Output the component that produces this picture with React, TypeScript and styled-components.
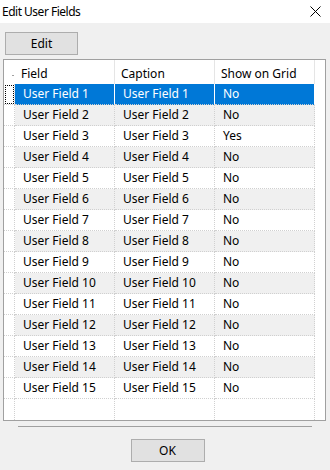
import React from 'react';
import styled, { createGlobalStyle } from 'styled-components';

const GlobalStyle = createGlobalStyle`
  html, body { margin: 0; padding: 0; background: #f0f0f0; }
  * { box-sizing: border-box; }
`;

const Window = styled.div`
  width: 330px;
  height: 470px;
  display: flex;
  flex-direction: column;
  background: #f0f0f0;
  font-family: "Noto Sans", "Liberation Sans", sans-serif;
  font-size: 12px;
  color: #000;
`;

const TitleBar = styled.div`
  height: 23px;
  background: #fff;
  display: flex;
  align-items: center;
  justify-content: space-between;
  padding: 0 9px 0 2px;
`;

const Title = styled.span`
  line-height: 16px;
  letter-spacing: -0.5px;
`;

const Toolbar = styled.div`
  display: flex;
  padding: 9px 0 0 5px;
`;

const DialogButton = styled.button<{ $width: number }>`
  width: ${p => p.$width}px;
  height: 23px;
  padding: 0;
  border: 1px solid #adadad;
  background: #e1e1e1;
  font: inherit;
  color: #000;
`;

const Grid = styled.div`
  margin: 4px 4px 0 3px;
  height: 362px;
  border: 1px solid #a0a0a0;
  background: #fff;
`;

const Row = styled.div<{ $height: number }>`
  display: grid;
  grid-template-columns: 11px 100px 100px 100px;
  width: 311px;
  height: ${p => p.$height}px;
`;

const HeaderCorner = styled.div`
  display: flex;
  justify-content: flex-end;
  padding: 15px 1px 0 0;
`;

const SortMark = styled.span`
  width: 2px;
  height: 1px;
  background: #a0a0a0;
`;

const HeaderCell = styled.div`
  padding: 6px 0 0 6px;
  line-height: 16px;
  border-right: 1px solid #e5e5e5;
  white-space: nowrap;
`;

const RowHeader = styled.div<{ $last?: boolean }>`
  background: #fff;
  border-right: 1px dotted #d0d0d0;
  border-bottom: ${p => (p.$last ? 'none' : '1px dotted #d0d0d0')};
`;

const FocusBox = styled.div`
  margin: 1px 0 0 1px;
  width: 9px;
  height: 19px;
  border: 1px dotted #000;
`;

const Cell = styled.div<{ $selected?: boolean; $alt?: boolean; $last?: boolean }>`
  padding-left: 8px;
  line-height: 20px;
  white-space: nowrap;
  background: ${p => (p.$selected ? '#0078d7' : p.$alt ? '#f0f0f0' : '#fff')};
  color: ${p => (p.$selected ? '#fff' : '#000')};
  border-right: ${p => (p.$selected ? '1px solid #fff' : '1px dotted #d0d0d0')};
  border-bottom: ${p => (p.$last ? 'none' : '1px dotted #d0d0d0')};
`;

const Separator = styled.div`
  margin: 5px 18px 0 18px;
  height: 1px;
  background: #a0a0a0;
`;

const Footer = styled.div`
  display: flex;
  justify-content: center;
  padding: 12px 0 0 5px;
`;

const CloseIcon = () => (
  <svg width="11" height="11" viewBox="0 0 11 11">
    <path d="M0.5 0.5L10.5 10.5M10.5 0.5L0.5 10.5" stroke="#000" strokeWidth="1" fill="none" />
  </svg>
);

const fields = Array.from({ length: 15 }, (_, i) => ({
  field: `User Field ${i + 1}`,
  caption: `User Field ${i + 1}`,
  show: i === 2 ? 'Yes' : 'No',
}));

export default function App() {
  return (
    <Window>
      <GlobalStyle />
      <TitleBar>
        <Title>Edit User Fields</Title>
        <CloseIcon />
      </TitleBar>
      <Toolbar>
        <DialogButton $width={73}>Edit</DialogButton>
      </Toolbar>
      <Grid>
        <Row $height={24}>
          <HeaderCorner>
            <SortMark />
          </HeaderCorner>
          <HeaderCell>Field</HeaderCell>
          <HeaderCell>Caption</HeaderCell>
          <HeaderCell>Show on Grid</HeaderCell>
        </Row>
        {fields.map((f, i) => {
          const selected = i === 0;
          const alt = i % 2 === 1;
          return (
            <Row $height={21} key={f.field}>
              <RowHeader>{selected && <FocusBox />}</RowHeader>
              <Cell $selected={selected} $alt={alt}>{f.field}</Cell>
              <Cell $selected={selected} $alt={alt}>{f.caption}</Cell>
              <Cell $selected={selected} $alt={alt}>{f.show}</Cell>
            </Row>
          );
        })}
        <Row $height={21}>
          <RowHeader $last />
          <Cell $last />
          <Cell $last />
          <Cell $last />
        </Row>
      </Grid>
      <Separator />
      <Footer>
        <DialogButton $width={74}>OK</DialogButton>
      </Footer>
    </Window>
  );
}
